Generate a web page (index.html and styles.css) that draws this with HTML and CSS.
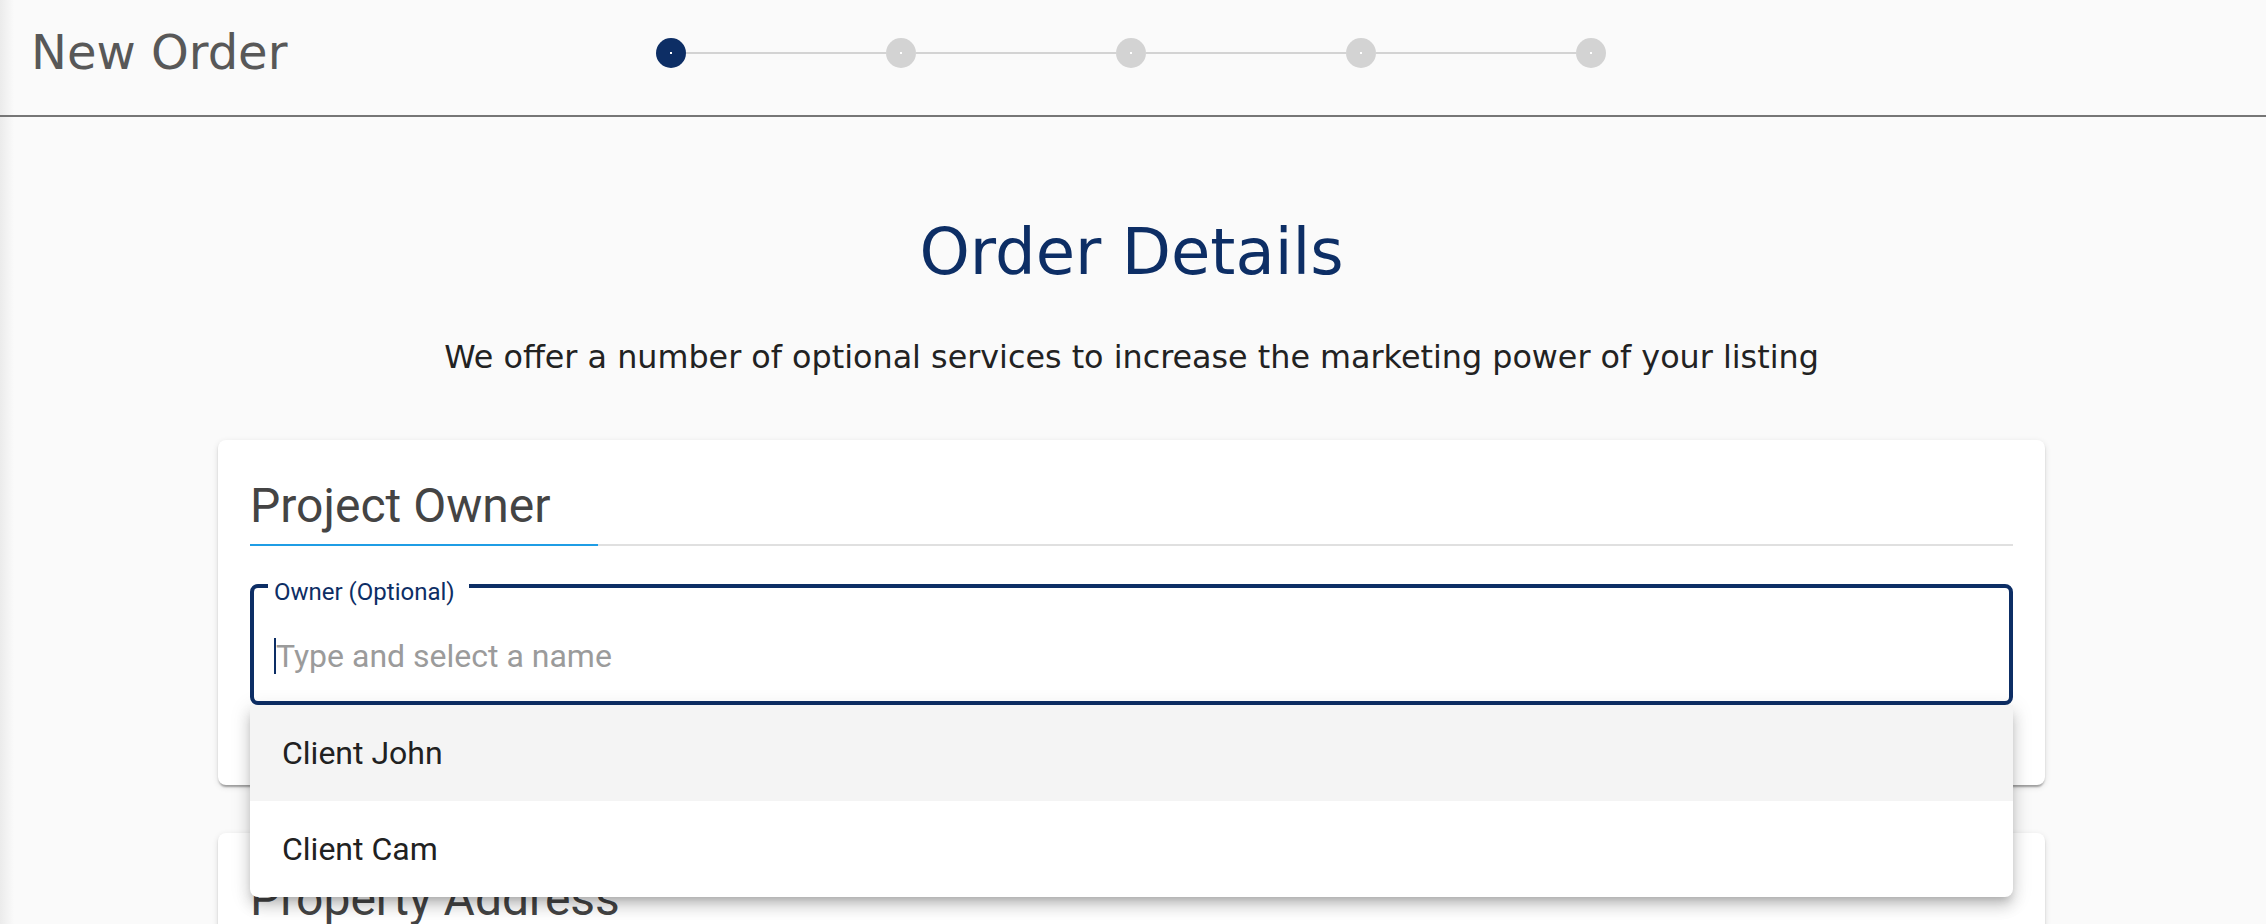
FILE: index.html
```html
<!DOCTYPE html>
<html lang="en">
<head>
    <meta charset="UTF-8">
    <meta name="viewport" content="width=device-width, initial-scale=1.0">
    <title>New Order</title>
    <link rel="stylesheet" href="styles.css">
</head>
<body>

    <div class="app">
        <header class="topbar">
            <h1 class="page-title">New Order</h1>
            <ol class="stepper">
                <li class="step active"><span class="dot"></span></li>
                <li class="step"><span class="dot"></span></li>
                <li class="step"><span class="dot"></span></li>
                <li class="step"><span class="dot"></span></li>
                <li class="step"><span class="dot"></span></li>
            </ol>
            <div class="topbar-end"></div>
        </header>

        <main class="content">
            <h2 class="content-title">Order Details</h2>
            <p class="content-lead">We offer a number of optional services to increase the marketing power of your listing</p>

            <section class="card">
                <h3 class="card-title">Project Owner</h3>
                <div class="autocomplete">
                    <fieldset class="outlined focused">
                        <legend>Owner (Optional)</legend>
                        <div class="field-input"><span class="caret"></span><span class="placeholder">Type and select a name</span></div>
                    </fieldset>
                    <ul class="menu">
                        <li class="menu-item hover">Client John</li>
                        <li class="menu-item">Client Cam</li>
                    </ul>
                </div>
            </section>

            <section class="card">
                <h3 class="card-title">Property Address</h3>
                <div class="autocomplete">
                    <fieldset class="outlined">
                        <legend>Address</legend>
                        <div class="field-input"><span class="placeholder">Start typing an address</span></div>
                    </fieldset>
                </div>
            </section>
        </main>
    </div>

</body>
</html>
```

FILE: styles.css
```css
/* Page */
html, body {
    margin: 0;
    height: 100%;
    overflow: hidden;
}
body {
    background: linear-gradient(to right, #ebebeb, #fafafa 14px) #fafafa;
    font-family: 'Roboto', 'Liberation Sans', sans-serif;
    color: #212121;
}
.app {
    height: 100%;
}

/* Top bar with title and stepper */
.topbar {
    display: grid;
    grid-template-columns: 1fr auto 1fr;
    align-items: start;
    height: 115px;
    padding: 0 32px 0 28px;
    border-bottom: 2px solid #767676;
}
.page-title {
    margin: 0;
    padding: 24px 0 0 3px;
    font-family: 'DejaVu Sans', sans-serif;
    font-size: 48px;
    font-weight: 400;
    line-height: normal;
    color: #585858;
}
.stepper {
    display: flex;
    align-items: center;
    margin: 0;
    padding: 38px 0 0;
    list-style: none;
}
.step {
    display: flex;
    align-items: center;
}
.step + .step::before {
    content: '';
    width: 200px;
    height: 2px;
    background-color: #d3d3d3;
}
.dot {
    display: flex;
    justify-content: center;
    align-items: center;
    width: 30px;
    height: 30px;
    border-radius: 50%;
    background-color: #d3d3d3;
}
.dot::after {
    content: '';
    width: 2px;
    height: 2px;
    background-color: #fff;
}
.step.active .dot {
    background-color: #0d2e65;
}

/* Content */
.content {
    padding-right: 3px;
}
.content-title {
    margin: 98px 0 0;
    font-family: 'DejaVu Sans', sans-serif;
    font-size: 64px;
    font-weight: 400;
    line-height: normal;
    text-align: center;
    color: #0d2e65;
}
.content-lead {
    margin: 49px 0 0;
    font-family: 'DejaVu Sans', sans-serif;
    font-size: 31.8px;
    line-height: normal;
    text-align: center;
    color: #222;
}

/* Cards */
.card {
    width: 1827px;
    box-sizing: border-box;
    margin: 65px auto 0;
    padding: 37px 32px 80px;
    background-color: #fff;
    border-radius: 8px;
    box-shadow: 0 4px 2px -2px rgba(0, 0, 0, 0.2), 0 2px 2px 0 rgba(0, 0, 0, 0.14), 0 2px 6px 0 rgba(0, 0, 0, 0.12);
}
.card + .card {
    margin-top: 48px;
}
.card-title {
    margin: 0;
    padding-bottom: 12px;
    font-size: 48px;
    font-weight: 400;
    line-height: normal;
    color: #444;
    background:
        linear-gradient(#1f9de5, #1f9de5) left bottom / 348px 2px no-repeat,
        linear-gradient(#e0e0e0, #e0e0e0) left bottom / 100% 2px no-repeat;
}

/* Outlined field */
.autocomplete {
    position: relative;
    margin-top: 20px;
}
.outlined {
    margin: 0;
    min-inline-size: 0;
    padding: 0 14px 26px;
    border: 2px solid #c4c4c4;
    border-radius: 8px;
}
.outlined.focused {
    border: 4px solid #0d2e65;
}
.outlined legend {
    padding: 12px 14px 0 6px;
    font-size: 24px;
    line-height: normal;
    color: #0d2e65;
}
.field-input {
    display: flex;
    align-items: center;
    padding: 31px 6px 0;
    font-size: 32px;
    line-height: normal;
}
.caret {
    width: 2px;
    height: 36px;
    background-color: #0d2e65;
}
.placeholder {
    color: #9b9b9b;
}

/* Suggestion list */
.menu {
    position: absolute;
    top: 100%;
    left: 0;
    right: 0;
    z-index: 2;
    margin: 0;
    padding: 0;
    list-style: none;
    background-color: #fff;
    border-radius: 0 0 8px 8px;
    box-shadow: 0 6px 8px -4px rgba(0, 0, 0, 0.2), 0 10px 14px 1px rgba(0, 0, 0, 0.12), 0 4px 20px 2px rgba(0, 0, 0, 0.1);
    overflow: hidden;
}
.menu-item {
    height: 96px;
    padding: 0 32px;
    font-size: 32px;
    line-height: 96px;
    color: #212121;
}
.menu-item.hover {
    background-color: #f4f4f4;
}
```
